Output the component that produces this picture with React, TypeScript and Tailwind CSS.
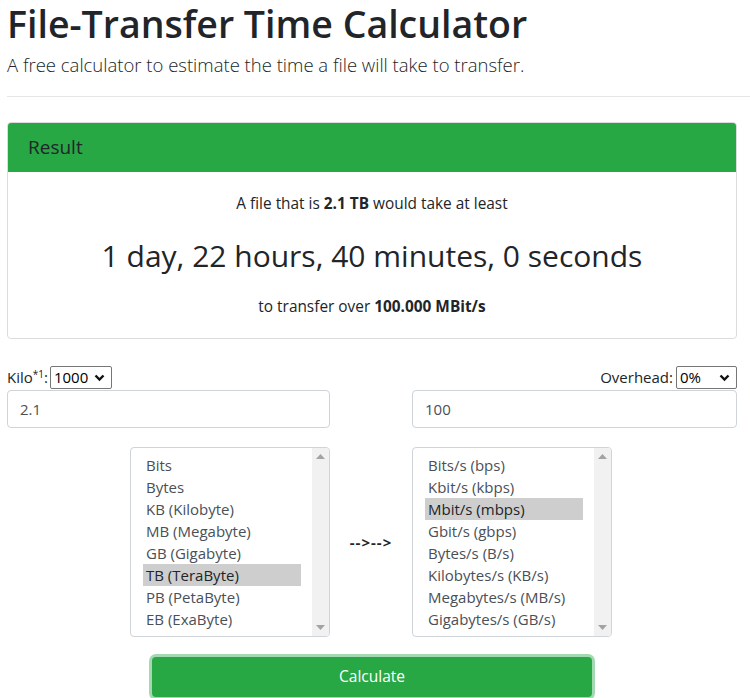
const FONT = "font-['Segoe_UI','Open_Sans',sans-serif]";

const SIZES = ['Bits', 'Bytes', 'KB (Kilobyte)', 'MB (Megabyte)', 'GB (Gigabyte)', 'TB (TeraByte)', 'PB (PetaByte)', 'EB (ExaByte)'];
const SPEEDS = [
  'Bits/s (bps)',
  'Kbit/s (kbps)',
  'Mbit/s (mbps)',
  'Gbit/s (gbps)',
  'Bytes/s (B/s)',
  'Kilobytes/s (KB/s)',
  'Megabytes/s (MB/s)',
  'Gigabytes/s (GB/s)',
];

const Chevron = () => (
  <svg width="11" height="8" viewBox="0 0 11 8" className="shrink-0">
    <path d="M1.5 1.5 L5.5 5.5 L9.5 1.5" fill="none" stroke="#111" strokeWidth="2.4" />
  </svg>
);

const MiniSelect = ({ value, width }: { value: string; width: string }) => (
  <div className={`flex h-[23px] items-center justify-between rounded-[2px] border border-[#767676] bg-white pl-[3px] pr-[6px] ${width}`}>
    <span className="text-[15px] leading-none text-black">{value}</span>
    <Chevron />
  </div>
);

const ListBox = ({ items, selected }: { items: string[]; selected: number }) => (
  <div className="flex h-[190px] w-[200px] rounded-[4px] border border-[#ced4da] bg-white">
    <div className="flex-1 py-[6px] pl-[12px] pr-[11px]">
      {items.map((it, i) => (
        <div
          key={it}
          className={`h-[22px] pl-[3px] text-[15px] leading-[22px] whitespace-nowrap ${i === selected ? 'bg-[#cecece] text-[#212529]' : 'text-[#495057]'}`}
        >
          {it}
        </div>
      ))}
    </div>
    <div className="flex w-[17px] flex-col items-center justify-between rounded-r-[3px] bg-[#f1f1f1] py-[6px]">
      <svg width="9" height="5" viewBox="0 0 9 5">
        <path d="M0 5 L4.5 0 L9 5 Z" fill="#a3a3a3" />
      </svg>
      <svg width="9" height="5" viewBox="0 0 9 5">
        <path d="M0 0 L4.5 5 L9 0 Z" fill="#a3a3a3" />
      </svg>
    </div>
  </div>
);

export default function App() {
  return (
    <div className={`min-h-[698px] bg-white px-[7px] pt-[1px] text-[#212529] ${FONT}`}>
      <h1 className="mt-[-3px] text-[37.5px] font-semibold leading-[52px]">File-Transfer Time Calculator</h1>
      <p className="mt-[1px] text-[18.5px] font-light leading-[28px]">
        A free calculator to estimate the time a file will take to transfer.
      </p>
      <hr className="mt-[17px] mr-[-7px] border-t border-[#e5e5e5]" />

      <div className="mt-[25px] w-[730px] overflow-hidden rounded-[4px] border border-[#dcdcdc]">
        <div className="flex h-[49px] items-center bg-[#28a745] px-[20px] text-[19px] font-medium text-[#212529]">Result</div>
        <div className="flex flex-col items-center pt-[21px] pb-[20px]">
          <p className="text-[15.4px] leading-[22px]">
            A file that is <b>2.1 TB</b> would take at least
          </p>
          <p className="mt-[21px] text-[30px] leading-[40px]">1 day, 22 hours, 40 minutes, 0 seconds</p>
          <p className="mt-[20px] text-[15.4px] leading-[22px]">
            to transfer over <b>100.000 MBit/s</b>
          </p>
        </div>
      </div>

      <div className="mt-[27px] grid w-[730px] grid-cols-[323px_1fr_325px] gap-y-[1px]">
        <div className="flex items-center gap-[2px] text-[15px]">
          <span>
            Kilo<sup className="text-[10px]">*1</sup>:
          </span>
          <MiniSelect value="1000" width="w-[62px]" />
        </div>
        <div />
        <div className="flex items-center justify-end gap-[3px] text-[15px]">
          <span>Overhead:</span>
          <MiniSelect value="0%" width="w-[61px]" />
        </div>

        <div className="flex h-[38px] items-center rounded-[4px] border border-[#ced4da] px-[12px] text-[15px] text-[#495057]">2.1</div>
        <div />
        <div className="flex h-[38px] items-center rounded-[4px] border border-[#ced4da] px-[12px] text-[15px] text-[#495057]">100</div>

        <div className="mt-[18px] flex justify-end">
          <ListBox items={SIZES} selected={5} />
        </div>
        <div className="mt-[18px] flex items-center justify-center text-[15px] font-bold tracking-[1px]">--&gt;--&gt;</div>
        <div className="mt-[18px] flex justify-start">
          <ListBox items={SPEEDS} selected={2} />
        </div>
      </div>

      <div className="mt-[20px] flex w-[730px] justify-center">
        <button className="h-[40px] w-[440px] rounded-[4px] bg-[#28a745] text-[15.5px] text-white shadow-[0_0_0_3px_rgba(72,180,97,0.5)]">
          Calculate
        </button>
      </div>
    </div>
  );
}
